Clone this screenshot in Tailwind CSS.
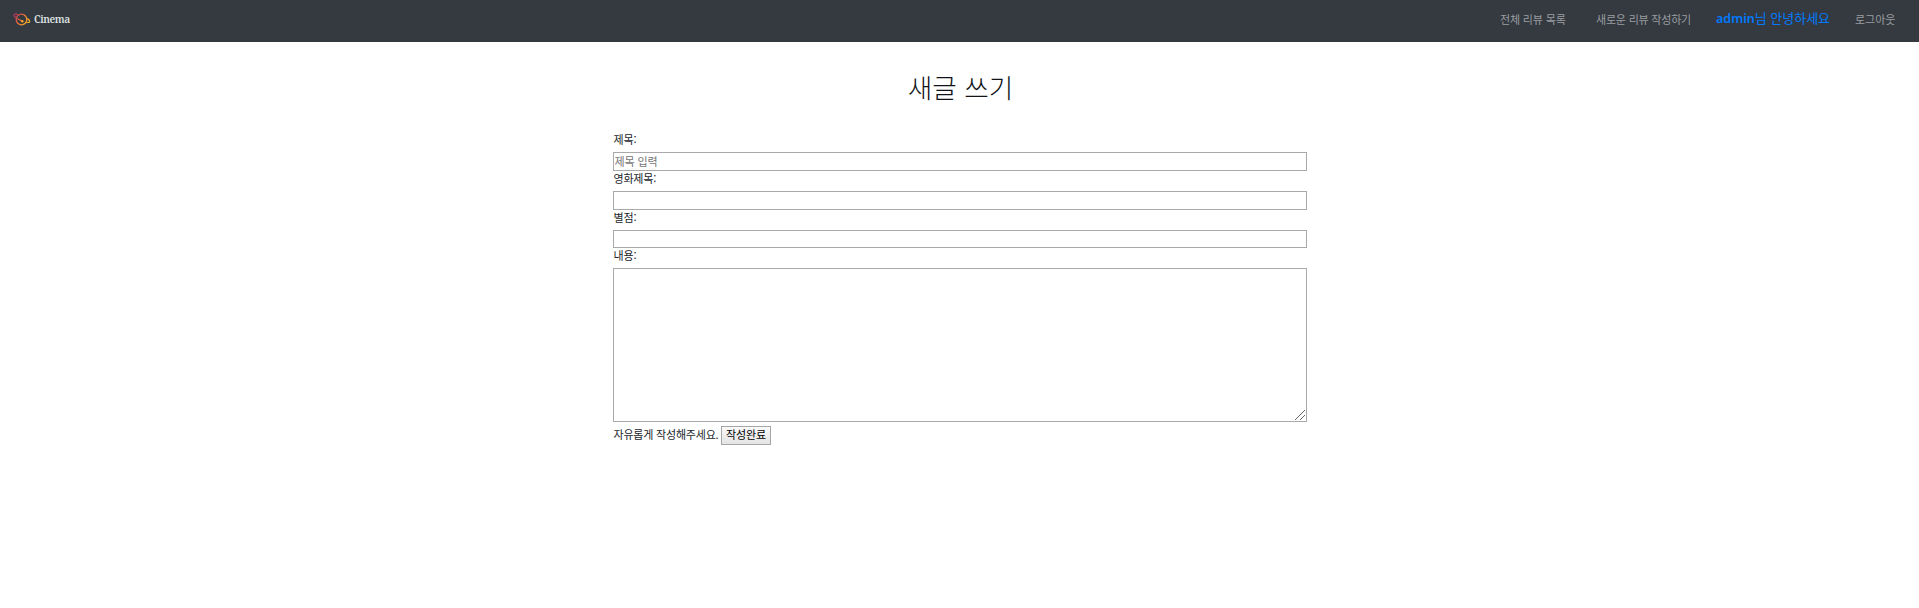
<!DOCTYPE html>
<html lang="ko">
<head>
<meta charset="utf-8">
<title>Cinema</title>
<script src="https://cdn.jsdelivr.net/npm/@tailwindcss/browser@4"></script>
</head>
<body class="bg-white text-[#212529] text-[11px] leading-[17px] font-['Noto_Sans_CJK_KR','Noto_Sans',sans-serif]">
<nav class="flex h-[42px] items-start justify-between bg-[#343a40] pl-[13px] pr-[24px]">
  <a class="mt-[10px] flex items-center gap-[3px]">
    <svg class="h-[18px] w-[18px]" viewBox="0 0 18 18" fill="none" stroke-linecap="round">
      <defs><linearGradient id="g" gradientUnits="userSpaceOnUse" x1="1" y1="3" x2="16" y2="13"><stop offset="0" stop-color="#a52b6d"/><stop offset=".45" stop-color="#e8663c"/><stop offset="1" stop-color="#f5b921"/></linearGradient></defs>
      <circle cx="8.500" cy="9.500" r="5.300" stroke="url(#g)" stroke-width="1.300"/>
      <path d="M4.300 4.500C2.500 3.400 .6 4 .9 5.600C1.200 6.500 2.200 7.200 3.200 7.700" stroke="url(#g)" stroke-width="1.300"/>
      <path d="M4.600 8.800L9.200 11.200M13.800 12.300C15.800 12.900 17.300 12 16.500 10.500C16.100 9.900 15.300 9.300 14.500 8.900" stroke="url(#g)" stroke-width="1.200"/>
      <circle cx="9.300" cy="11.200" r="1.200" fill="#f5a52a"/>
    </svg>
    <span class="font-['Noto_Serif','DejaVu_Serif','Liberation_Serif',serif] text-[10.2px] leading-[18px] font-semibold text-[#dfe1e3] tracking-[-0.4px]">Cinema</span>
  </a>
  <div class="flex pt-[11px] leading-[17px] text-[#9a9da0]">
    <a class="w-[96px] whitespace-nowrap tracking-[-0.15px]">전체 리뷰 목록</a>
    <a class="w-[120px] whitespace-nowrap tracking-[-0.2px]">새로운 리뷰 작성하기</a>
    <a class="-mt-[2px] w-[139px] whitespace-nowrap text-[13px] text-[#007bff]"><b class="font-['Noto_Sans'] text-[12.5px] font-semibold">admin</b>님 안녕하세요</a>
    <a class="w-[40px] whitespace-nowrap">로그아웃</a>
  </div>
</nav>
<main class="mx-auto w-[694px]">
  <h1 class="pt-[27px] pl-[2px] text-center text-[26.7px] leading-[36px] font-light text-[#101418]">새글 쓰기</h1>
  <form class="mt-[25px] flex flex-col">
    <label class="h-[22px] pt-px pl-px tracking-[-0.15px]">제목:</label>
    <input class="h-[19px] border border-[#a9a9a9] px-px pb-px leading-[15px] tracking-[-0.1px] placeholder:text-[#757575]" placeholder="제목 입력">
    <label class="h-[20px] pl-px leading-[15px] tracking-[-0.2px]">영화제목:</label>
    <input class="h-[19px] border border-[#a9a9a9] px-px">
    <label class="h-[20px] pl-px leading-[15px] tracking-[-0.15px]">별점:</label>
    <input class="h-[18px] border border-[#a9a9a9] px-px">
    <label class="h-[20px] pl-px leading-[15px] tracking-[-0.15px]">내용:</label>
    <div class="relative h-[154px]">
      <textarea class="block h-full w-full resize-none border border-[#a9a9a9] p-px"></textarea>
      <svg class="pointer-events-none absolute right-[2px] bottom-[2px] h-[10px] w-[10px]" viewBox="0 0 10 10" stroke="#666" stroke-width="1"><path d="M0 10L10 0M5 10L10 5"/></svg>
    </div>
    <div class="mt-[4px] flex items-center gap-[3px]">
      <span class="-mt-[2px] w-[105px] whitespace-nowrap pl-px tracking-[-0.2px]">자유롭게 작성해주세요.</span>
      <button class="flex h-[19px] w-[50px] justify-center border border-[#a6a6a6] bg-gradient-to-b from-[#fafafa] to-[#e4e4e4] pl-px leading-[15px] text-black tracking-[-0.1px]">작성완료</button>
    </div>
  </form>
</main>
</body>
</html>
